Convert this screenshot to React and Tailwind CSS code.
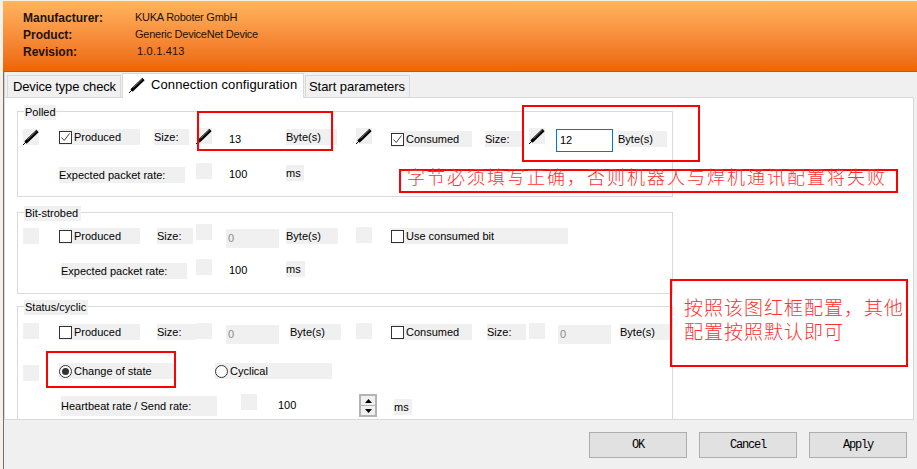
import React from "react";

function Pen({ className = "" }) {
  return (
    <svg viewBox="0 0 16 16" className={`w-4 h-4 shrink-0 ${className}`}>
      <path d="M0 16 L3 13" stroke="#000" strokeWidth="1" fill="none" />
      <path d="M2.5 13.5 L14.5 2" stroke="#000" strokeWidth="3.2" fill="none" />
      <path d="M4.5 10.5 L13.5 2" stroke="#8a8a8a" strokeWidth="0.8" fill="none" />
    </svg>
  );
}

function Cell({ className = "", pen }) {
  return (
    <div className={`w-4 h-4 shrink-0 bg-[#f0f0f0] ${className}`}>{pen && <Pen />}</div>
  );
}

function Txt({ className = "", children }) {
  return (
    <div className={`h-4 shrink-0 flex items-center text-[11px] leading-none whitespace-nowrap ${className}`}>
      {children}
    </div>
  );
}

function Check({ className = "", checked, children }) {
  return (
    <Txt className={`bg-[#f0f0f0] ${className}`}>
      <span className="w-[13px] h-[13px] shrink-0 border border-[#333] bg-white mr-[2px] flex items-center justify-center">
        {checked && (
          <svg viewBox="0 0 11 11" className="w-[11px] h-[11px]">
            <path d="M1.5 5.5 L4.2 8.5 L9.5 1.5" stroke="#444" strokeWidth="1" fill="none" />
          </svg>
        )}
      </span>
      {children}
    </Txt>
  );
}

function Radio({ className = "", checked, children }) {
  return (
    <Txt className={`bg-[#f0f0f0] ${className}`}>
      <span className="w-[13px] h-[13px] shrink-0 rounded-full border border-[#333] bg-white mr-[2px] flex items-center justify-center">
        {checked && <span className="w-[7px] h-[7px] rounded-full bg-[#333]" />}
      </span>
      {children}
    </Txt>
  );
}

function ZeroField({ className = "" }) {
  return (
    <div className={`w-[53px] h-[19px] shrink-0 bg-[#f0f0f0] pl-[2px] flex items-center text-[11px] text-[#8a8a8a] ${className}`}>
      0
    </div>
  );
}

function Group({ title, legendClass, className, children }) {
  return (
    <div className={`relative ml-[12px] w-[656px] border border-[#d9d9d9] shrink-0 ${className}`}>
      <div className={`absolute left-[6px] top-[-7px] h-[15px] bg-[#f0f0f0] flex items-center pl-[1px] text-[11px] leading-none ${legendClass}`}>
        {title}
      </div>
      {children}
    </div>
  );
}

function Spinner() {
  return (
    <div className="w-[18px] h-[23px] shrink-0 border-2 border-[#b4b4b4] flex flex-col gap-[1px] bg-[#b4b4b4]">
      <div className="flex-1 bg-[#f0f0f0] flex items-center justify-center">
        <svg viewBox="0 0 7 4" className="w-[7px] h-[4px]"><path d="M3.5 0 L7 4 H0 Z" fill="#000" /></svg>
      </div>
      <div className="flex-1 bg-[#f0f0f0] flex items-center justify-center">
        <svg viewBox="0 0 7 4" className="w-[7px] h-[4px]"><path d="M0 0 H7 L3.5 4 Z" fill="#000" /></svg>
      </div>
    </div>
  );
}

function FootButton({ children }) {
  return (
    <button className="w-[98px] h-[26px] bg-[#e1e1e1] border border-[#adadad] font-['Liberation_Mono',monospace] text-[12px] tracking-[-1.2px] text-black">
      {children}
    </button>
  );
}

const redBox = "absolute border-2 border-[#ff0000] pointer-events-none";
const note = "font-['Liberation_Serif','Noto_Sans_CJK_SC',serif] font-light text-[#ff3030] whitespace-nowrap";
const tabText = "text-[13px] whitespace-nowrap";

export default function App() {
  return (
    <div className="relative w-[917px] h-[469px] overflow-hidden bg-[#f5f1e6] pl-[3px] flex flex-col text-black font-['Liberation_Sans','Noto_Sans_CJK_SC',sans-serif]">
      {/* Device header */}
      <div className="mt-[1px] h-[70px] shrink-0 bg-gradient-to-b from-[#ffb45e] to-[#ec6500] pl-[20px] pt-[8px] grid grid-cols-[112px_1fr] auto-rows-[17px] items-center text-[11px] leading-none text-[#1c1208]">
        <div className="font-bold text-[12px]">Manufacturer:</div>
        <div className="tracking-[-0.25px]">KUKA Roboter GmbH</div>
        <div className="font-bold text-[12px]">Product:</div>
        <div className="tracking-[-0.25px]">Generic DeviceNet Device</div>
        <div className="font-bold text-[12px]">Revision:</div>
        <div className="pl-[2px] tracking-[0.2px]">1.0.1.413</div>
      </div>

      <div className="flex-1 min-h-0 flex flex-col bg-[#f0f0f0] border-t border-[#707070] border-l border-l-[#707070]">
        {/* Tabs */}
        <div className="h-[25px] shrink-0 pl-[2px] flex items-start relative z-10 border-l border-[#d0d0d0]">
          <div className={`mt-[3px] w-[114px] h-[22px] border border-b-0 border-[#d9d9d9] flex items-center pl-[5px] tracking-[-0.15px] ${tabText}`}>
            Device type check
          </div>
          <div className={`mt-[1px] ml-[1px] w-[182px] h-[25px] bg-white border border-b-0 border-[#d9d9d9] flex items-center pl-[6px] pb-[2px] tracking-[0.1px] ${tabText}`}>
            <Pen className="mr-[6px]" />
            Connection configuration
          </div>
          <div className={`mt-[3px] ml-[1px] w-[105px] h-[22px] border border-b-0 border-[#d9d9d9] flex items-center pl-[3px] tracking-[-0.05px] ${tabText}`}>
            Start parameters
          </div>
        </div>

        {/* Connection configuration page */}
        <div className="h-[323px] shrink-0 mr-[3px] bg-white border border-[#d9d9d9] overflow-hidden pt-[13px] flex flex-col">
          <Group title="Polled" legendClass="w-[32px]" className="h-[86px] pt-[16px]">
            <div className="flex items-start h-[24px]">
              <Cell pen className="ml-[5px] mt-[1px]" />
              <Check checked className="ml-[20px] mt-[1px] w-[81px]">Produced</Check>
              <Txt className="ml-[14px] mt-[1px] w-[35px] bg-[#f0f0f0]">Size:</Txt>
              <Cell pen className="ml-[7px]" />
              <Txt className="ml-[17px] mt-[3px] w-[57px]">13</Txt>
              <Txt className="mt-[1px] w-[51px] bg-[#f0f0f0]">Byte(s)</Txt>
              <Cell pen className="ml-[19px]" />
              <Check checked className="ml-[19px] mt-[3px] w-[81px]">Consumed</Check>
              <Txt className="ml-[13px] mt-[3px] w-[39px] bg-[#f0f0f0]">Size:</Txt>
              <Cell pen className="ml-[5px]" />
              <div className="ml-[11px] mt-[1px] w-[57px] h-[23px] shrink-0 border border-[#0078d7] flex items-center pl-[3px] text-[11px]">12</div>
              <Txt className="ml-[5px] mt-[3px] w-[49px] bg-[#f0f0f0]">Byte(s)</Txt>
            </div>
            <div className="flex items-start mt-[11px]">
              <Txt className="ml-[41px] mt-[4px] w-[126px] bg-[#f0f0f0]">Expected packet rate:</Txt>
              <Cell className="ml-[11px]" />
              <Txt className="ml-[17px] mt-[3px] w-[57px]">100</Txt>
              <Txt className="mt-[2px] w-[18px] bg-[#f0f0f0]">ms</Txt>
            </div>
          </Group>

          <Group title="Bit-strobed" legendClass="w-[57px]" className="mt-[15px] h-[82px] pt-[11px]">
            <div className="flex items-start h-[24px]">
              <Cell className="ml-[5px] mt-[4px]" />
              <Check className="ml-[20px] mt-[4px] w-[81px]">Produced</Check>
              <Txt className="ml-[17px] mt-[4px] w-[36px] bg-[#f0f0f0]">Size:</Txt>
              <Cell className="ml-[3px]" />
              <ZeroField className="ml-[14px] mt-[5px]" />
              <Txt className="ml-[7px] mt-[4px] w-[52px] bg-[#f0f0f0]">Byte(s)</Txt>
              <Cell className="ml-[18px] mt-[3px]" />
              <Check className="ml-[19px] mt-[4px] w-[177px]">Use consumed bit</Check>
            </div>
            <div className="flex items-start mt-[11px]">
              <Txt className="ml-[43px] mt-[4px] w-[126px] bg-[#f0f0f0]">Expected packet rate:</Txt>
              <Cell className="ml-[9px]" />
              <Txt className="ml-[17px] mt-[3px] w-[57px]">100</Txt>
              <Txt className="mt-[2px] w-[19px] bg-[#f0f0f0]">ms</Txt>
            </div>
          </Group>

          <Group title="Status/cyclic" legendClass="w-[64px]" className="mt-[12px] h-[130px] pt-[16px]">
            <div className="flex items-start h-[21px]">
              <Cell className="ml-[5px]" />
              <Check className="ml-[20px] mt-[1px] w-[81px]">Produced</Check>
              <Txt className="ml-[17px] mt-[1px] w-[39px] bg-[#f0f0f0]">Size:</Txt>
              <Cell />
              <ZeroField className="ml-[14px] mt-[2px]" />
              <Txt className="ml-[11px] mt-[1px] w-[51px] bg-[#f0f0f0]">Byte(s)</Txt>
              <Cell className="ml-[15px]" />
              <Check className="ml-[19px] mt-[1px] w-[81px]">Consumed</Check>
              <Txt className="ml-[15px] mt-[1px] w-[39px] bg-[#f0f0f0]">Size:</Txt>
              <Cell className="ml-[3px]" />
              <ZeroField className="ml-[13px] mt-[2px]" />
              <Txt className="ml-[9px] mt-[1px] w-[50px] bg-[#f0f0f0]">Byte(s)</Txt>
            </div>
            <div className="flex items-start mt-[19px] h-[18px]">
              <Cell className="ml-[5px] mt-[2px]" />
              <Radio checked className="ml-[20px] w-[116px]">Change of state</Radio>
              <Radio className="ml-[40px] w-[117px]">Cyclical</Radio>
            </div>
            <div className="flex items-start mt-[13px]">
              <Txt className="ml-[43px] mt-[2px] !h-[20px] w-[156px] bg-[#f0f0f0]">Heartbeat rate / Send rate:</Txt>
              <Cell className="ml-[24px]" />
              <Txt className="ml-[21px] mt-[3px] w-[81px]">100</Txt>
              <Spinner />
              <Txt className="ml-[17px] mt-[5px] w-[18px] bg-[#f0f0f0]">ms</Txt>
            </div>
          </Group>
        </div>

        {/* Dialog buttons */}
        <div className="flex-1 flex justify-end items-start gap-[12px] pr-[10px] pt-[12px] bg-[#f0f0f0]">
          <FootButton>OK</FootButton>
          <FootButton>Cancel</FootButton>
          <FootButton>Apply</FootButton>
        </div>
      </div>

      {/* Red annotations drawn on top of the screenshot */}
      <div className={`${redBox} left-[197px] top-[111px] w-[136px] h-[40px]`} />
      <div className={`${redBox} left-[522px] top-[105px] w-[178px] h-[57px]`} />
      <div className={`${redBox} left-[46px] top-[351px] w-[130px] h-[37px]`} />
      <div className={`${redBox} left-[399px] top-[169px] w-[499px] h-[24px]`} />
      <div className={`${redBox} left-[670px] top-[279px] w-[238px] h-[88px]`} />
      <div className={`absolute left-[407px] top-[165px] text-[18px] tracking-[2px] ${note}`}>字节必须填写正确，否则机器人与焊机通讯配置将失败</div>
      <div className={`absolute left-[684px] top-[297px] text-[19px] tracking-[1px] leading-[24px] ${note}`}>
        <div>按照该图红框配置，其他</div>
        <div>配置按照默认即可</div>
      </div>
    </div>
  );
}
